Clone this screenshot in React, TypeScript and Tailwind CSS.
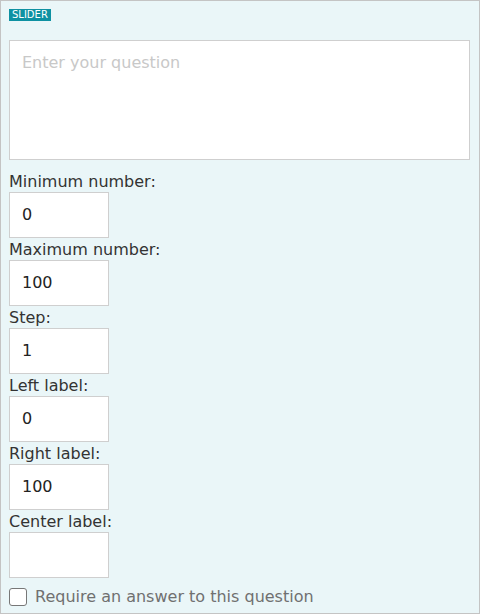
import React from "react";

const fields = [
  { label: "Minimum number:", value: "0" },
  { label: "Maximum number:", value: "100" },
  { label: "Step:", value: "1" },
  { label: "Left label:", value: "0" },
  { label: "Right label:", value: "100" },
  { label: "Center label:", value: "" },
];

export default function App() {
  return (
    <div
      className="w-[480px] h-[614px] border border-[#c4c4c4] bg-[#eaf6f8] px-2 pt-2 text-[#333]"
      style={{ fontFamily: '"DejaVu Sans", sans-serif' }}
    >
      <div className="flex">
        <span className="bg-[#0e91a2] text-white text-[10px] leading-[12px] px-[3px] h-3">SLIDER</span>
      </div>
      <div className="mt-[19px] h-[120px] w-[461px] border border-[#cfcfcf] bg-white px-3 pt-[10px] text-[16px] text-[#c8c8c8]">
        Enter your question
      </div>
      <div className="mt-[10px] flex flex-col">
        {fields.map((f) => (
          <div key={f.label} className="flex flex-col">
            <div className="h-[22px] text-[16px] leading-[24px] text-[#333]">{f.label}</div>
            <div className="h-[46px] w-[100px] border border-[#cfcfcf] bg-white px-3 flex items-center text-[16px] text-[#222]">
              {f.value}
            </div>
          </div>
        ))}
      </div>
      <div className="mt-[10px] flex items-center gap-2">
        <div className="h-[18px] w-[18px] rounded-[3px] border border-[#777] bg-white" />
        <span className="text-[16px] leading-[18px] text-[#707070]">Require an answer to this question</span>
      </div>
    </div>
  );
}
